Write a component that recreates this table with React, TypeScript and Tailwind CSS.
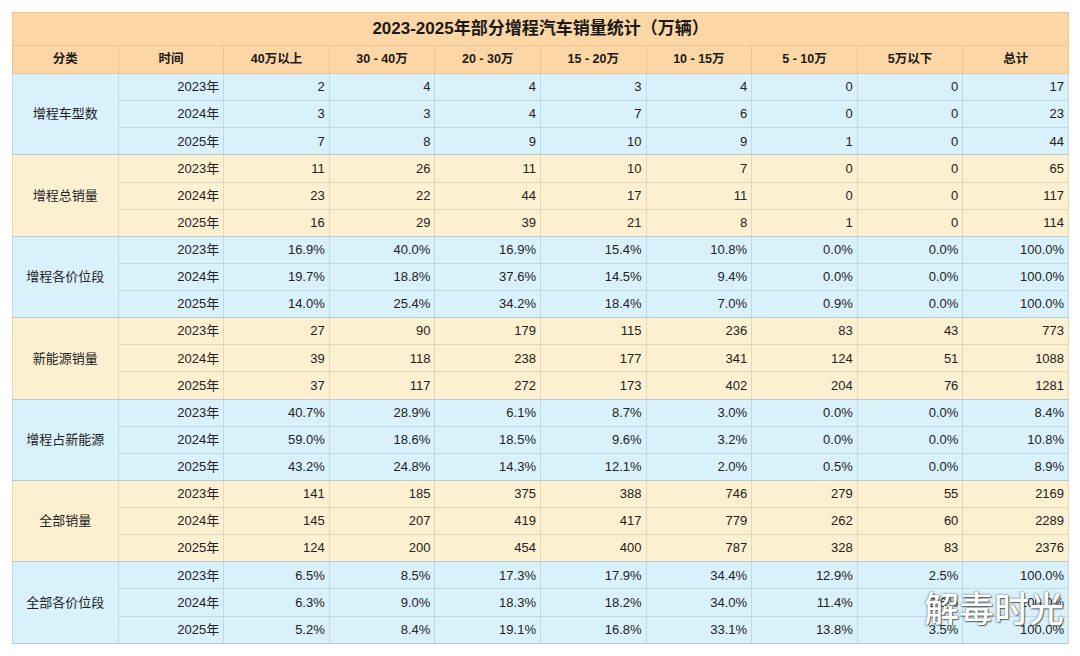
import React from "react";

type Group = { name: string; kind: "blue" | "beige"; rows: string[][] };

const groups: Group[] = [
  { name: "增程车型数", kind: "blue", rows: [
    ["2", "4", "4", "3", "4", "0", "0", "17"],
    ["3", "3", "4", "7", "6", "0", "0", "23"],
    ["7", "8", "9", "10", "9", "1", "0", "44"],
  ]},
  { name: "增程总销量", kind: "beige", rows: [
    ["11", "26", "11", "10", "7", "0", "0", "65"],
    ["23", "22", "44", "17", "11", "0", "0", "117"],
    ["16", "29", "39", "21", "8", "1", "0", "114"],
  ]},
  { name: "增程各价位段", kind: "blue", rows: [
    ["16.9%", "40.0%", "16.9%", "15.4%", "10.8%", "0.0%", "0.0%", "100.0%"],
    ["19.7%", "18.8%", "37.6%", "14.5%", "9.4%", "0.0%", "0.0%", "100.0%"],
    ["14.0%", "25.4%", "34.2%", "18.4%", "7.0%", "0.9%", "0.0%", "100.0%"],
  ]},
  { name: "新能源销量", kind: "beige", rows: [
    ["27", "90", "179", "115", "236", "83", "43", "773"],
    ["39", "118", "238", "177", "341", "124", "51", "1088"],
    ["37", "117", "272", "173", "402", "204", "76", "1281"],
  ]},
  { name: "增程占新能源", kind: "blue", rows: [
    ["40.7%", "28.9%", "6.1%", "8.7%", "3.0%", "0.0%", "0.0%", "8.4%"],
    ["59.0%", "18.6%", "18.5%", "9.6%", "3.2%", "0.0%", "0.0%", "10.8%"],
    ["43.2%", "24.8%", "14.3%", "12.1%", "2.0%", "0.5%", "0.0%", "8.9%"],
  ]},
  { name: "全部销量", kind: "beige", rows: [
    ["141", "185", "375", "388", "746", "279", "55", "2169"],
    ["145", "207", "419", "417", "779", "262", "60", "2289"],
    ["124", "200", "454", "400", "787", "328", "83", "2376"],
  ]},
  { name: "全部各价位段", kind: "blue", rows: [
    ["6.5%", "8.5%", "17.3%", "17.9%", "34.4%", "12.9%", "2.5%", "100.0%"],
    ["6.3%", "9.0%", "18.3%", "18.2%", "34.0%", "11.4%", "2.6%", "100.0%"],
    ["5.2%", "8.4%", "19.1%", "16.8%", "33.1%", "13.8%", "3.5%", "100.0%"],
  ]},
];

const headers = ["分类", "时间", "40万以上", "30 - 40万", "20 - 30万", "15 - 20万", "10 - 15万", "5 - 10万", "5万以下", "总计"];
const years = ["2023年", "2024年", "2025年"];

export default function App() {
  return (
    <div
      className="w-[1080px] h-[656px] bg-white relative overflow-hidden text-[#222]"
      style={{ fontFamily: '"Liberation Sans", Tahoma, "Noto Sans CJK SC", sans-serif' }}
    >
      <div className="pt-[12px] pl-[12px]">
        <table className="w-[1056px] table-fixed border-collapse text-[13px]">
          <colgroup>
            {headers.map((_, i) => (
              <col key={i} className="w-[105.6px]" />
            ))}
          </colgroup>
          <thead>
            <tr className="h-[33px] bg-[#fcd6a5]">
              <th colSpan={10} className="border border-[#efc590] text-[17px] font-bold text-[#1a1a1a] text-center align-middle">
                2023-2025年部分增程汽车销量统计（万辆）
              </th>
            </tr>
            <tr className="h-[28px] bg-[#fcd6a5]">
              {headers.map((h) => (
                <th key={h} className="border border-[#e9c596] text-[12.5px] font-bold text-center align-middle text-[#1a1a1a]">
                  {h}
                </th>
              ))}
            </tr>
          </thead>
          <tbody>
            {groups.map((g) => {
              const bg = g.kind === "blue" ? "bg-[#d9f1fb]" : "bg-[#fcf0d1]";
              const bc = g.kind === "blue" ? "border-[#c2d9e4]" : "border-[#e3d8bb]";
              return g.rows.map((r, ri) => (
                <tr key={g.name + ri} className={`h-[27.14px] ${bg}`}>
                  {ri === 0 && (
                    <td rowSpan={3} className={`border ${bc} border-t-[#b9cbd3] border-b-[#b9cbd3] text-center align-middle text-[13px]`}>
                      {g.name}
                    </td>
                  )}
                  <td className={`border ${bc} ${ri === 0 ? "border-t-[#b9cbd3]" : ""} ${ri === 2 ? "border-b-[#b9cbd3]" : ""} text-right pr-[4px] align-middle`}>
                    {years[ri]}
                  </td>
                  {r.map((v, ci) => (
                    <td
                      key={ci}
                      className={`border ${bc} ${ri === 0 ? "border-t-[#b9cbd3]" : ""} ${ri === 2 ? "border-b-[#b9cbd3]" : ""} text-right pr-[4px] align-middle`}
                    >
                      {v}
                    </td>
                  ))}
                </tr>
              ));
            })}
          </tbody>
        </table>
      </div>
      <div
        className="absolute left-[924px] top-[589px] text-[35px] font-medium text-white leading-none"
        style={{
          fontFamily: '"Noto Sans CJK SC", sans-serif',
          textShadow: "0 0 2px rgba(40,40,40,0.8), 1px 1px 1px rgba(40,40,40,0.6)",
        }}
      >
        解毒时光
      </div>
    </div>
  );
}
